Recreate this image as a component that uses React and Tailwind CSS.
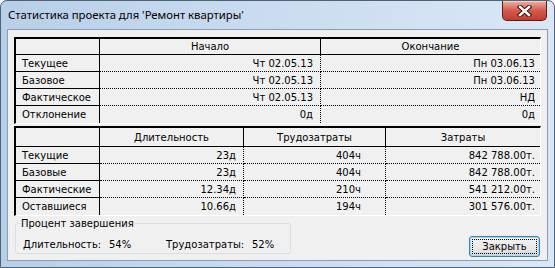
import { Fragment } from "react";

const font = { fontFamily: '"DejaVu Sans", Tahoma, sans-serif' };

// rows for the first (dates) block
const dateRows = [
    ["Текущее", "Чт 02.05.13", "Пн 03.06.13"],
    ["Базовое", "Чт 02.05.13", "Пн 03.06.13"],
    ["Фактическое", "Чт 02.05.13", "НД"],
    ["Отклонение", "0д", "0д"],
];

// rows for the second (totals) block
const totalRows = [
    ["Текущие", "23д", "404ч", "842 788.00т."],
    ["Базовые", "23д", "404ч", "842 788.00т."],
    ["Фактические", "12.34д", "210ч", "541 212.00т."],
    ["Оставшиеся", "10.66д", "194ч", "301 576.00т."],
];

function CloseButton() {
    return (
        <div className="w-[45px] h-[20px] rounded-b-[5px] border border-t-0 border-[#5b1d17] bg-gradient-to-b from-[#eab0a2] via-[#d45a4c] to-[#c23d2f] flex items-center justify-center shadow-[inset_0_1px_0_rgba(255,255,255,0.45)]">
            <svg width="15" height="12" viewBox="0 0 15 12">
                <path d="M3 2 L12 10 M12 2 L3 10" stroke="#3a1410" strokeWidth="4.4" strokeLinecap="square" />
                <path d="M3 2 L12 10 M12 2 L3 10" stroke="#ffffff" strokeWidth="2.4" strokeLinecap="square" />
            </svg>
        </div>
    );
}

function DatesTable() {
    return (
        <div className="border-t-2 border-l-2 border-black border-b border-r border-b-white border-r-white">
            <div className="grid grid-cols-[84px_221px_219px] text-[10px] text-black">
                {/* header */}
                <div className="h-[16px] border-r border-b border-black" />
                <div className="h-[16px] border-r border-b border-black flex items-center justify-center">Начало</div>
                <div className="h-[16px] border-b border-black flex items-center justify-center">Окончание</div>
                {dateRows.map((r, i) => {
                    const last = i === dateRows.length - 1;
                    return (
                        <Fragment key={r[0]}>
                            <div className={`h-[17px] pl-[6px] flex items-center border-r border-black ${last ? "" : "border-b"}`}>{r[0]}</div>
                            <div className={`h-[17px] pr-[7px] flex items-center justify-end border-r border-dotted border-black ${last ? "" : "border-b"}`}>{r[1]}</div>
                            <div className={`h-[17px] pr-[5px] flex items-center justify-end border-dotted border-black ${last ? "" : "border-b"}`}>{r[2]}</div>
                        </Fragment>
                    );
                })}
            </div>
        </div>
    );
}

function TotalsTable() {
    return (
        <div className="border-t-2 border-l-2 border-black border-b border-r border-b-white border-r-white">
            <div className="grid grid-cols-[84px_144px_142px_154px] text-[10px] text-black">
                <div className="h-[19px] border-r border-b border-black" />
                <div className="h-[19px] border-r border-b border-black flex items-center justify-center">Длительность</div>
                <div className="h-[19px] border-r border-b border-black flex items-center justify-center">Трудозатраты</div>
                <div className="h-[19px] border-b border-black flex items-center justify-center">Затраты</div>
                {totalRows.map((r, i) => {
                    const last = i === totalRows.length - 1;
                    return (
                        <Fragment key={r[0]}>
                            <div className={`h-[17px] pl-[6px] flex items-center border-r border-black ${last ? "" : "border-b"}`}>{r[0]}</div>
                            <div className={`h-[17px] pr-[7px] flex items-center justify-end border-r border-dotted border-black ${last ? "" : "border-b"}`}>{r[1]}</div>
                            <div className={`h-[17px] pr-[24px] flex items-center justify-end border-r border-dotted border-black ${last ? "" : "border-b"}`}>{r[2]}</div>
                            <div className={`h-[17px] pr-[5px] flex items-center justify-end border-dotted border-black ${last ? "" : "border-b"}`}>{r[3]}</div>
                        </Fragment>
                    );
                })}
            </div>
        </div>
    );
}

export default function App() {
    return (
        <div className="w-[555px] h-[268px] overflow-hidden" style={font}>
            <div className="w-full h-full rounded-t-[7px] border border-[#4f6378] bg-gradient-to-r from-[#b8cfe8] via-[#cbdcf0] to-[#d9e7f6] flex flex-col">
                {/* title bar */}
                <div className="h-[28px] flex items-start justify-between pl-[7px] pr-[7px]">
                    <div className="pt-[6px] text-[11.3px] text-black" style={{ fontFamily: '"Noto Sans", "Open Sans", sans-serif' }}>
                        Статистика проекта для 'Ремонт квартиры'
                    </div>
                    <CloseButton />
                </div>

                {/* client area */}
                <div className="mx-[6px] h-[232px] border border-[#8a9db3] bg-[#f0f0f0] px-[6px] pt-[7px]">
                    <DatesTable />
                    <div className="h-[2px]" />
                    <TotalsTable />

                    <div className="flex items-start justify-between mt-[1px]">
                        <fieldset className="ml-[1px] w-[276px] h-[37px] border border-[#d5dfe5] rounded-[3px] px-[4px]">
                            <legend className="px-[1px] text-[10px] leading-[13px] text-black">Процент завершения</legend>
                            <div className="flex items-center text-[10px] leading-[13px] text-black pl-[3px] pt-[8px] whitespace-nowrap">
                                <span className="w-[86px]">Длительность:</span>
                                <span className="w-[57px]">54%</span>
                                <span className="w-[86px]">Трудозатраты:</span>
                                <span>52%</span>
                            </div>
                        </fieldset>
                        <button className="mt-[19px] mr-[1px] w-[71px] h-[21px] rounded-[3px] border border-[#3c7fb1] bg-gradient-to-b from-[#f2f2f2] via-[#ebebeb] to-[#d6d6d6] shadow-[inset_0_0_0_1px_#9ddcf9] text-[10px] text-black flex items-center justify-center p-[2px]">
                            <span className="w-full h-full border border-dotted border-black flex items-center justify-center">Закрыть</span>
                        </button>
                    </div>
                </div>
            </div>
        </div>
    );
}
